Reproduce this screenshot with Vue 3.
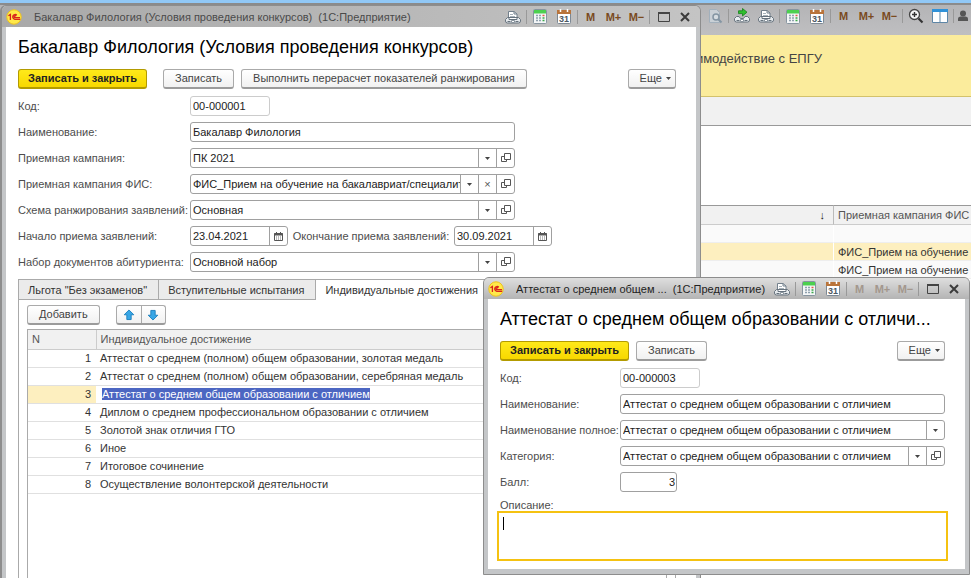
<script setup>
import { ref } from 'vue'

const memory = ['M', 'M+', 'M−']

const contest = ref({
  code: '00-000001',
  name: 'Бакалавр Филология',
  start: '23.04.2021',
  end: '30.09.2021',
})

const references = ref([
  { id: 'campaign', label: 'Приемная кампания:', value: 'ПК 2021', clear: false },
  { id: 'fis', label: 'Приемная кампания ФИС:', value: 'ФИС_Прием на обучение на бакалавриат/специалит', clear: true },
  { id: 'scheme', label: 'Схема ранжирования заявлений:', value: 'Основная', clear: false },
])
const documents = ref('Основной набор')

const tabs = ['Льгота "Без экзаменов"', 'Вступительные испытания', 'Индивидуальные достижения']
const activeTab = ref(2)

const achievements = [
  'Аттестат о среднем (полном) общем образовании, золотая медаль',
  'Аттестат о среднем (полном) общем образовании, серебряная медаль',
  'Аттестат о среднем общем образовании с отличием',
  'Диплом о среднем профессиональном образовании с отличием',
  'Золотой знак отличия ГТО',
  'Иное',
  'Итоговое сочинение',
  'Осуществление волонтерской деятельности',
]
const selected = ref(2)

const item = ref({
  code: '00-000003',
  name: 'Аттестат о среднем общем образовании с отличием',
  fullName: 'Аттестат о среднем общем образовании с отличием',
  category: 'Аттестат о среднем общем образовании с отличием',
  score: '3',
  description: '',
})

const campaigns = ['', 'ФИС_Прием на обучение н', 'ФИС_Прием на обучение н']
</script>

<template>
  <svg class="sprite" aria-hidden="true">
    <symbol id="logo" viewBox="0 0 16 16">
      <circle cx="8" cy="8" r="7.2" fill="#ffe94a" stroke="#efc21c" />
      <path d="M2.4 6.800 4.400 5.500V11M10.800 6.200A2.400 2.400 0 1 0 8.800 10.300H14.200M9.800 7.400A.9.9 0 1 0 8.800 8.700H14" fill="none" stroke="#d8231c" stroke-width="1.300" />
    </symbol>
    <symbol id="printer" viewBox="0 0 16 16">
      <path d="M3.500 9V2.500H9L12 5v4z" fill="#fff" stroke="#73808c" />
      <path d="M9 2.500V5h3" fill="none" stroke="#73808c" />
      <path d="M5 5.500h3M5 7.500h5" stroke="#a7b1b9" />
      <path d="M2.500 8.500h11l2 2V12a2 2 0 0 1-2 2h-11a2 2 0 0 1-2-2v-1.500z" fill="#e6eaed" stroke="#66727d" />
      <path d="M4 8.500v2h8v-2z" fill="#fff" stroke="#66727d" />
      <path d="M2.500 12.500h3M10.500 12.500h3" stroke="#66727d" />
      <path d="M6.500 11.500h3v2h-3z" fill="#fff" stroke="#8a959e" />
    </symbol>
    <symbol id="link" viewBox="0 0 16 16">
      <path d="M4.500 2.800h4V.5l4.500 3.700L8.500 8V5.600h-4z" fill="#2fc02f" stroke="#14801a" stroke-width=".8" />
      <path d="M2.500 8.500H5l1.500 2h3l1.500-2h2.500l2 2V12a2 2 0 0 1-2 2h-11a2 2 0 0 1-2-2v-1.500z" fill="#e9edf0" stroke="#66727d" />
      <path d="M2.500 12.500h3M10.500 12.500h3" stroke="#66727d" />
      <path d="M6.500 11.500h3v2h-3z" fill="#fff" stroke="#8a959e" />
    </symbol>
    <symbol id="calc" viewBox="0 0 14 15">
      <rect x=".5" y=".5" width="13" height="14" rx="1" fill="#f4f6f7" stroke="#8795a0" />
      <path d="M1 1h12v3.500H1z" fill="#4cd04f" />
      <path d="M3 6.500h2M6 6.500h2M3 9h2M6 9h2M3 11.500h2M6 11.500h2" stroke="#8fa1ae" stroke-width="1.500" />
      <path d="M9.500 6.500h2" stroke="#e05a4a" stroke-width="1.500" />
      <path d="M9.500 9h2M9.500 11.500h2" stroke="#3ba94a" stroke-width="1.500" />
    </symbol>
    <symbol id="calendar" viewBox="0 0 14 15">
      <rect x=".5" y="1.500" width="13" height="13" rx="1" fill="#fff" stroke="#7c8894" />
      <path d="M0 1h14v4H0z" fill="#b9743b" />
      <path d="M3.500 0v3M10.500 0v3" stroke="#fff" stroke-width="1.500" />
      <text x="7" y="12.800" text-anchor="middle" font-family="Liberation Sans, sans-serif" font-size="9" font-weight="bold" fill="#4c5862">31</text>
    </symbol>
    <symbol id="preview" viewBox="0 0 16 16">
      <path d="M2.500 1.500h7l3 3v10h-10z" fill="#c9d0d6" stroke="#a2b0bc" />
      <circle cx="9" cy="9" r="3" fill="#d5dce1" stroke="#8495a3" stroke-width="1.500" />
      <path d="m11 11 3.500 3.500" stroke="#8495a3" stroke-width="2" />
    </symbol>
    <symbol id="zoom" viewBox="0 0 16 16">
      <circle cx="6.500" cy="6.500" r="5" fill="#f5f5f5" stroke="#444" stroke-width="1.300" />
      <path d="M4 6.500h5M6.500 4v5" stroke="#333" stroke-width="1.400" />
      <path d="m10.500 10.500 4 4" stroke="#333" stroke-width="2.200" />
    </symbol>
    <symbol id="columns" viewBox="0 0 16 14">
      <path d="M.5.5h15v13H.5z" fill="#fff" stroke="#5e86a6" />
      <path d="M0 0h16v3H0z" fill="#3192d8" />
      <path d="M8 3v10" stroke="#5e86a6" />
    </symbol>
    <symbol id="user" viewBox="0 0 12 12">
      <circle cx="6" cy="3.500" r="3" fill="#555" />
      <path d="M1 11V8.500C1 7 3 6.500 4.500 6.500h3C9 6.500 11 7 11 8.500V11z" fill="#555" />
    </symbol>
    <symbol id="maximize" viewBox="0 0 12 10">
      <path d="M.5.5h11v9H.5z" fill="none" stroke="#444" />
      <path d="M0 1h12" stroke="#444" stroke-width="2" />
    </symbol>
    <symbol id="close" viewBox="0 0 10 10">
      <path d="m1 1 8 8M9 1 1 9" stroke="#3b3b3b" stroke-width="2" />
    </symbol>
    <symbol id="open" viewBox="0 0 10 10">
      <path d="M3.500.5h6v6h-6z" fill="#fff" stroke="#555" />
      <path d="M3.500 3.500h-3v5h5v-2" fill="none" stroke="#555" />
    </symbol>
    <symbol id="date" viewBox="0 0 9 9">
      <path d="M.5 1.500h8v7h-8z" fill="#fff" stroke="#555" />
      <path d="M0 2.500h9" stroke="#555" stroke-width="2" />
      <path d="M2.500 0v2M6.500 0v2" stroke="#555" />
      <path d="M2 5h5M2 7h5" stroke="#777" stroke-dasharray="1 1" />
    </symbol>
    <symbol id="caret" viewBox="0 0 5 3">
      <path d="M0 0h5L2.500 3z" fill="#444" />
    </symbol>
    <symbol id="arrow" viewBox="0 0 10 10">
      <path d="m5 .8 4 4H6.800v4H3.200v-4H1z" fill="#37a6e6" stroke="#1f82bf" stroke-width=".8" />
    </symbol>
  </svg>

  <div class="desktop">
    <section class="base">
      <div class="base-bar">
        <button class="tool" aria-label="Предварительный просмотр"><svg class="i16"><use href="#preview" /></svg></button>
        <i class="divider"></i>
        <button class="tool" aria-label="Ссылка"><svg class="i16"><use href="#link" /></svg></button>
        <button class="tool" aria-label="Печать"><svg class="i16"><use href="#printer" /></svg></button>
        <i class="divider"></i>
        <button class="tool" aria-label="Калькулятор"><svg class="i14"><use href="#calc" /></svg></button>
        <button class="tool" aria-label="Календарь"><svg class="i14"><use href="#calendar" /></svg></button>
        <i class="divider"></i>
        <button v-for="m in memory" :key="m" class="memory">{{ m }}</button>
        <i class="divider"></i>
        <button class="tool" aria-label="Масштаб"><svg class="i16"><use href="#zoom" /></svg></button>
        <button class="tool" aria-label="Панели"><svg class="panes"><use href="#columns" /></svg></button>
        <i class="divider"></i>
        <button class="account" aria-label="Пользователь"><svg class="i12"><use href="#user" /></svg></button>
      </div>
      <nav class="sections"><a href="#epgu">Взаимодействие с ЕПГУ</a></nav>
      <div class="strip"></div>
      <div class="blank"></div>
      <table class="campaigns">
        <thead>
          <tr><th class="sort">↓</th><th>Приемная кампания ФИС</th></tr>
        </thead>
        <tbody>
          <tr v-for="(c, i) in campaigns" :key="i" :class="{ current: i === 1 }"><td></td><td>{{ c }}</td></tr>
        </tbody>
      </table>
    </section>

    <section class="window contest">
      <header class="title">
        <svg class="logo"><use href="#logo" /></svg>
        <span class="caption">Бакалавр Филология (Условия проведения конкурсов)&nbsp; (1С:Предприятие)</span>
        <button class="tool" aria-label="Печать"><svg class="i16"><use href="#printer" /></svg></button>
        <i class="divider"></i>
        <button class="tool" aria-label="Калькулятор"><svg class="i14"><use href="#calc" /></svg></button>
        <button class="tool" aria-label="Календарь"><svg class="i14"><use href="#calendar" /></svg></button>
        <i class="divider"></i>
        <button v-for="m in memory" :key="m" class="memory">{{ m }}</button>
        <i class="divider"></i>
        <div class="frames">
          <button aria-label="Развернуть"><svg class="max"><use href="#maximize" /></svg></button>
          <button aria-label="Закрыть"><svg class="i10"><use href="#close" /></svg></button>
        </div>
      </header>
      <div class="body">
        <h1>Бакалавр Филология (Условия проведения конкурсов)</h1>
        <div class="commands spaced">
          <button class="btn primary">Записать и закрыть</button>
          <button class="btn">Записать</button>
          <button class="btn">Выполнить перерасчет показателей ранжирования</button>
          <button class="btn more">Еще <svg class="caret"><use href="#caret" /></svg></button>
        </div>

        <form class="form" @submit.prevent>
          <label for="code">Код:</label>
          <div class="field readonly short"><input id="code" v-model="contest.code" readonly /></div>

          <label for="name">Наименование:</label>
          <div class="field"><input id="name" v-model="contest.name" /></div>

          <template v-for="r in references" :key="r.id">
            <label :for="r.id">{{ r.label }}</label>
            <div class="field">
              <input :id="r.id" v-model="r.value" />
              <button type="button" aria-label="Выбрать"><svg class="caret"><use href="#caret" /></svg></button>
              <button v-if="r.clear" type="button" aria-label="Очистить">×</button>
              <button type="button" aria-label="Открыть"><svg class="i10"><use href="#open" /></svg></button>
            </div>
          </template>

          <label for="start">Начало приема заявлений:</label>
          <div class="dates">
            <div class="field date">
              <input id="start" v-model="contest.start" />
              <button type="button" aria-label="Календарь"><svg class="i9"><use href="#date" /></svg></button>
            </div>
            <label for="end">Окончание приема заявлений:</label>
            <div class="field date">
              <input id="end" v-model="contest.end" />
              <button type="button" aria-label="Календарь"><svg class="i9"><use href="#date" /></svg></button>
            </div>
          </div>

          <label for="docs">Набор документов абитуриента:</label>
          <div class="field">
            <input id="docs" v-model="documents" />
            <button type="button" aria-label="Выбрать"><svg class="caret"><use href="#caret" /></svg></button>
            <button type="button" aria-label="Открыть"><svg class="i10"><use href="#open" /></svg></button>
          </div>
        </form>

        <div class="tabs" role="tablist">
          <button v-for="(t, i) in tabs" :key="t" role="tab" :aria-selected="i === activeTab" :class="{ active: i === activeTab }" @click="activeTab = i">{{ t }}</button>
        </div>
        <div class="panel">
          <div class="commands">
            <button class="btn add">Добавить</button>
            <div class="pair">
              <button aria-label="Вверх"><svg class="i12"><use href="#arrow" /></svg></button>
              <button aria-label="Вниз"><svg class="i12 down"><use href="#arrow" /></svg></button>
            </div>
          </div>
          <div class="list">
            <table>
              <thead>
                <tr><th class="num">N</th><th>Индивидуальное достижение</th></tr>
              </thead>
              <tbody>
                <tr v-for="(a, i) in achievements" :key="a" :class="{ current: i === selected }" @click="selected = i">
                  <td class="num">{{ i + 1 }}</td>
                  <td><span>{{ a }}</span></td>
                </tr>
              </tbody>
            </table>
          </div>
        </div>
      </div>
    </section>

    <section class="window active item">
      <header class="title">
        <svg class="logo"><use href="#logo" /></svg>
        <span class="caption">Аттестат о среднем общем ...&nbsp; (1С:Предприятие)</span>
        <button class="tool" aria-label="Печать"><svg class="i16"><use href="#printer" /></svg></button>
        <i class="divider"></i>
        <button class="tool" aria-label="Калькулятор"><svg class="i14"><use href="#calc" /></svg></button>
        <button class="tool" aria-label="Календарь"><svg class="i14"><use href="#calendar" /></svg></button>
        <i class="divider"></i>
        <button v-for="m in memory" :key="m" class="memory" disabled>{{ m }}</button>
        <i class="divider"></i>
        <div class="frames">
          <button aria-label="Развернуть"><svg class="max"><use href="#maximize" /></svg></button>
          <button aria-label="Закрыть"><svg class="i10"><use href="#close" /></svg></button>
        </div>
      </header>
      <div class="body">
        <h1>Аттестат о среднем общем образовании с отличи...</h1>
        <div class="commands">
          <button class="btn primary">Записать и закрыть</button>
          <button class="btn">Записать</button>
          <button class="btn more">Еще <svg class="caret"><use href="#caret" /></svg></button>
        </div>
        <form class="form narrow" @submit.prevent>
          <label for="item-code">Код:</label>
          <div class="field readonly short"><input id="item-code" v-model="item.code" readonly /></div>
          <label for="item-name">Наименование:</label>
          <div class="field"><input id="item-name" v-model="item.name" /></div>
          <label for="item-full">Наименование полное:</label>
          <div class="field">
            <input id="item-full" v-model="item.fullName" />
            <button type="button" aria-label="Выбрать"><svg class="caret"><use href="#caret" /></svg></button>
          </div>
          <label for="item-cat">Категория:</label>
          <div class="field">
            <input id="item-cat" v-model="item.category" />
            <button type="button" aria-label="Выбрать"><svg class="caret"><use href="#caret" /></svg></button>
            <button type="button" aria-label="Открыть"><svg class="i10"><use href="#open" /></svg></button>
          </div>
          <label for="item-score">Балл:</label>
          <div class="field score"><input id="item-score" v-model="item.score" /></div>
        </form>
        <label class="note-label" for="item-note">Описание:</label>
        <div class="note">
          <i class="cursor"></i>
          <textarea id="item-note" v-model="item.description"></textarea>
        </div>
      </div>
    </section>
  </div>
</template>

<style>
body {
  margin: 0;
  overflow: hidden;
}
</style>

<style scoped>
.sprite {
  display: none;
}

.desktop {
  position: relative;
  height: 100vh;
  overflow: hidden;
  box-sizing: border-box;
  padding-top: 3px;
  background: #91c8f6;
  font-family: "Liberation Sans", Arial, sans-serif;
  font-size: 11px;
  line-height: 16px;
  color: #333;
}

.desktop *,
.desktop *::before {
  box-sizing: border-box;
}

button,
input,
textarea {
  margin: 0;
  padding: 0;
  border: 0;
  background: none;
  font: inherit;
  color: inherit;
  outline: 0;
}

svg {
  display: block;
  flex: none;
}

.i16 { width: 16px; height: 16px; }
.i14 { width: 14px; height: 15px; }
.i12 { width: 12px; height: 12px; }
.i10 { width: 10px; height: 10px; }
.i9 { width: 9px; height: 9px; }
.panes { width: 16px; height: 14px; }
.max { width: 12px; height: 10px; }
.caret { width: 5px; height: 3px; }
.down { transform: rotate(180deg); }

/* main application frame */
.base {
  height: 100%;
  border-top: 2px solid #8b8b8b;
  background: #fff;
}

.base-bar {
  display: flex;
  justify-content: flex-end;
  align-items: center;
  height: 30px;
  padding-bottom: 8px;
  background: linear-gradient(#b4b4b6, #bfbfc1);
}

.tool,
.memory,
.frames button,
.account {
  display: flex;
  align-items: center;
  justify-content: center;
  flex: none;
  height: 20px;
  width: 24px;
}

.memory {
  width: 23px;
  font-weight: bold;
  color: #7a4a1e;
}

.memory:disabled {
  color: #a3978d;
}

.frames {
  display: flex;
  margin-left: 2px;
}

.frames button {
  width: 21px;
}

.account {
  width: 16px;
}

.divider {
  flex: none;
  width: 1px;
  height: 14px;
  margin: 0 1px;
  background: #999;
}

.sections {
  display: flex;
  justify-content: flex-end;
  height: 62px;
  padding: 16px 149px 0 0;
  border-bottom: 1px solid #d3c26c;
  background: #fbec9c;
}

.sections a {
  font-size: 13px;
  color: #444;
  text-decoration: none;
}

.strip {
  height: 29px;
  background: #f1f1f1;
  border-bottom: 1px solid #999;
}

.blank {
  height: 79px;
}

.campaigns {
  width: 100%;
  table-layout: fixed;
  border-collapse: separate;
  border-spacing: 0;
}

.campaigns th,
.campaigns td {
  height: 18px;
  padding: 0 0 0 4px;
  border-bottom: 1px solid #eee;
  background: #fafafa;
  font-weight: normal;
  text-align: left;
  line-height: 16px;
  white-space: nowrap;
}

.campaigns td:first-child {
  border-right: 1px solid #fff;
}

.campaigns th {
  height: 20px;
  background: #f1f1f1;
  border-top: 1px solid #999;
  border-bottom-color: #ccc;
  color: #555;
}

.campaigns .sort {
  padding-right: 8px;
  border-right: 1px solid #bbb;
  text-align: right;
  color: #222;
}

.campaigns th:last-child {
  width: 137px;
}

.campaigns .current td {
  background: #fdefbf;
}

/* windows */
.window {
  position: absolute;
  display: flex;
  flex-direction: column;
  border: 1px solid #8d8d8d;
  border-radius: 6px 6px 0 0;
  background: #c4c6c8;
}

.contest {
  top: 5px;
  bottom: -20px;
  left: 0;
  width: 701px;
  border-left-width: 2px;
}

.item {
  top: 277px;
  left: 483px;
  right: 1px;
}

.title {
  display: flex;
  align-items: center;
  height: 21px;
  padding-right: 5px;
  border-radius: 5px 5px 0 0;
  background: linear-gradient(90deg, #a9a9a9, #c4c4c4);
}

.active .title {
  background: linear-gradient(#dedede, #b4b4b4);
}

.logo {
  width: 16px;
  height: 16px;
  margin-left: 4px;
}

.caption {
  flex: 1;
  min-width: 0;
  margin-left: 12px;
  overflow: hidden;
  white-space: nowrap;
  color: #4a4a4a;
}

.active .caption {
  color: #222;
}

.body {
  display: flex;
  flex-direction: column;
  flex: 1;
  margin: 0 4px 5px;
  padding: 0 20px 0 12px;
  background: #fff;
}

h1 {
  margin: 9px 0 11px;
  font-size: 18px;
  font-weight: normal;
  line-height: 22px;
  color: #000;
  white-space: nowrap;
}

.commands {
  display: flex;
  gap: 7px;
}

.spaced .primary {
  margin-right: 9px;
}

.btn,
.pair {
  height: 20px;
  border: 1px solid #aaa;
  border-bottom: 2px solid #9b9b9b;
  border-radius: 3px;
  background: linear-gradient(#fff, #f1f1f1);
}

.btn {
  padding: 0 11px;
  line-height: 17px;
  white-space: nowrap;
  color: #444;
}

.primary {
  padding: 0 9px;
  border-color: #b39b00;
  background: linear-gradient(#ffe91a, #f7d800);
  font-weight: bold;
  color: #222;
}

.more {
  display: flex;
  align-items: center;
  gap: 4px;
  margin-left: auto;
  padding: 0 4px 0 11px;
}

.form {
  display: grid;
  grid-template-columns: 172px 325px;
  gap: 6px 0;
  margin-top: 7px;
  align-items: center;
}

.form.narrow {
  grid-template-columns: 120px 1fr;
}

label {
  white-space: nowrap;
  color: #4d4d4d;
}

.field {
  display: flex;
  height: 20px;
  border: 1px solid #a0a0a0;
  border-radius: 3px;
  background: #fff;
}

.field input {
  flex: 1;
  min-width: 0;
  width: 0;
  padding-left: 2px;
  color: #222;
}

.field button {
  display: flex;
  align-items: center;
  justify-content: center;
  width: 18px;
  border-left: 1px solid #a0a0a0;
  color: #555;
}

.readonly {
  border-color: #ccc;
}

.short {
  width: 80px;
}

.date {
  width: 98px;
}

.score {
  width: 57px;
}

.score input {
  padding-right: 1px;
  text-align: right;
}

.dates {
  display: flex;
  align-items: center;
  width: 362px;
  justify-content: space-between;
}

.tabs {
  display: flex;
  margin-top: 7px;
  border-left: 1px solid #aaa;
}

.tabs button {
  height: 21px;
  padding: 0 11px 0 9px;
  border: 1px solid #aaa;
  border-left: 0;
  background: #ebebeb;
  white-space: nowrap;
}

.tabs .active {
  flex: 1;
  border-bottom-color: #fff;
  background: #fff;
  text-align: left;
}

.panel {
  display: flex;
  flex-direction: column;
  flex: 1;
  padding: 5px 8px 0;
  border: 1px solid #aaa;
  border-top: 0;
}

.add {
  margin-right: 9px;
}

.pair {
  display: flex;
}

.pair button {
  display: flex;
  align-items: center;
  justify-content: center;
  width: 24px;
}

.pair button + button {
  border-left: 1px solid #aaa;
}

.list {
  flex: 1;
  margin-top: 4px;
  border: 1px solid #aaa;
}

.list table {
  width: 100%;
  border-collapse: collapse;
}

.list th,
.list td {
  height: 18px;
  padding: 0 5px 0 4px;
  border-bottom: 1px solid #e0e0e0;
  font-weight: normal;
  text-align: left;
  line-height: 16px;
}

.list th {
  height: 19px;
  background: #f1f1f1;
  border-bottom-color: #ccc;
  color: #555;
}

.list .num {
  width: 68px;
}

.list th.num {
  border-right: 1px solid #ccc;
}

.list td.num {
  text-align: right;
}

.list .current .num {
  background: #fdefbf;
}

.list .current span {
  display: inline-block;
  margin-left: 2px;
  line-height: 12px;
  background: #4c66c2;
  color: #fff;
}

.note-label {
  margin-top: 5px;
}

.note {
  position: relative;
  height: 50px;
  margin: -2px -3px 8px;
  border: 2px solid #f5c211;
}

.note textarea {
  display: block;
  width: 100%;
  height: 100%;
  padding: 2px 4px;
  resize: none;
}

.cursor {
  position: absolute;
  top: 4px;
  left: 4px;
  width: 1px;
  height: 13px;
  background: #000;
}
</style>
